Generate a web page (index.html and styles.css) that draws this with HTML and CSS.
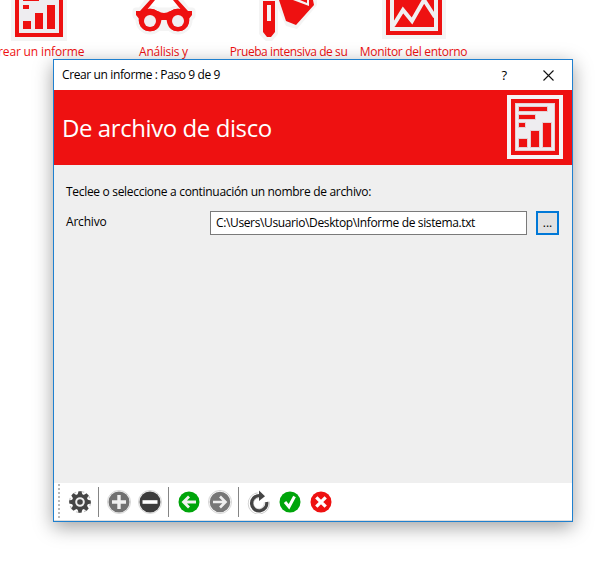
FILE: index.html
```
<!DOCTYPE html>
<html lang="es">
<head>
<meta charset="utf-8">
<title>Crear un informe</title>
<link rel="stylesheet" href="styles.css">
</head>
<body>
<main class="desktop">
  <nav class="tasks">
    <a class="task">
      <svg class="task-icon" width="64" height="41" viewBox="0 0 64 41">
        <path fill="#f4f4f4" d="M4 0h56v41H4z"/><path fill="#e11" d="M8 0h48v37H8z"/><path fill="#eeedf0" d="M12 0h40v33H12z"/>
        <path fill="#e11" d="M16 0h16v1H16zM16 5h6v4h-6zM16 21h8v8h-8zM28 13h8v16h-8zM40 5h8v24h-8z"/>
      </svg>
      <span class="label-report">Crear un informe</span>
    </a>
    <a class="task">
      <svg class="task-icon" width="64" height="41" viewBox="0 0 64 41">
        <g stroke="#f4f4f4" stroke-width="7" stroke-linejoin="round" fill="#f4f4f4"><path d="M4 11h56v5l-4 3H8l-4-3zM17 0l-9 12M47 0l9 12"/><circle cx="18" cy="20" r="11"/><circle cx="46" cy="20" r="11"/></g>
        <path fill="#e11" d="M4 11h4L18 0h5L14 11h12q3 2 6 2t6-2h12L41 0h5l10 11h4v4l-4 5H8l-4-5z"/>
        <circle cx="18" cy="20" r="11.2" fill="#e11"/><circle cx="46" cy="20" r="11.2" fill="#e11"/>
        <path fill="#f4f4f4" d="M27 23q5-4 10 0v8H27z"/><circle cx="18" cy="20" r="11.2" fill="#e11"/><circle cx="46" cy="20" r="11.2" fill="#e11"/>
        <circle cx="18" cy="21" r="6" fill="#f0eff1"/><circle cx="46" cy="21" r="6" fill="#f0eff1"/>
      </svg>
      <span class="label-analysis">Análisis y</span>
    </a>
    <a class="task">
      <svg class="task-icon" width="64" height="41" viewBox="0 0 64 41">
        <path fill="#f4f4f4" d="M2 0h58v5L40 29l-11-3-8-18v26l-6 7H9l-7-7z"/>
        <path fill="#e11" d="M6 1h12v31l-4 5h-4l-4-5zM22 0h34l1 5-18 20-10-4z"/>
        <path fill="#f4f4f4" d="M10 5h4v16h-4zM36 0h16v6z"/><path fill="#e11" d="M43 0h7v3z"/>
      </svg>
      <span class="label-test">Prueba intensiva de su</span>
    </a>
    <a class="task">
      <svg class="task-icon" width="64" height="41" viewBox="0 0 64 41">
        <path fill="#f4f4f4" d="M0 0h64v39H0z"/><path fill="#e11" d="M4 0h56v35H4z"/><path fill="#f0eff1" d="M8 0h48v31H8z"/>
        <path fill="#e11" d="M12 0h40v27H12z"/>
        <path fill="none" stroke="#f0eff1" stroke-width="4" d="M11 26L21 10l9 11L42 0l11 17"/>
      </svg>
      <span class="label-monitor">Monitor del entorno</span>
    </a>
  </nav>

  <section class="dialog" role="dialog">
    <header class="titlebar">
      <span class="title">Crear un informe : Paso 9 de 9</span>
      <span class="help">?</span>
      <svg class="close" width="11" height="11" viewBox="0 0 11 11"><path d="M.5.5l10 10M10.500.5l-10 10" stroke="#111" stroke-width="1.1"/></svg>
    </header>
    <div class="banner">
      <h1>De archivo de disco</h1>
      <svg width="56" height="64" viewBox="0 0 56 64">
        <path fill="#f5f4f6" d="M0 0h56v64H0z"/><path fill="#e11" d="M4 4h48v56H4z"/><path fill="#e6cfd3" d="M8 8h40v48H8z"/><path fill="#eeedf0" d="M9 9h38v46H9z"/>
        <path fill="#e6cfd3" d="M11 11h30v6H11zM11 19h18v6H11zM11 27h8v6h-8zM11 43h10v10H11zM23 35h10v18H23zM35 27h10v26H35z"/>
        <path fill="#e11" d="M12 12h28v4H12zM12 20h16v4H12zM12 28h6v4h-6zM12 44h8v8h-8zM24 36h8v16h-8zM36 28h8v24h-8z"/>
      </svg>
    </div>
    <div class="content">
      <p class="prompt">Teclee o seleccione a continuación un nombre de archivo:</p>
      <div class="field">
        <span class="field-name">Archivo</span>
        <div class="path"><span>C:\Users\Usuario\Desktop\Informe de sistema.txt</span></div>
        <button class="browse">...</button>
      </div>
    </div>
    <footer class="toolbar">
      <i class="grip"></i>
      <svg class="tool gear" viewBox="-12 -12 24 24">
        <circle r="10.500" fill="none" stroke="#c4c4c4" stroke-width="1.200" stroke-dasharray="4 4.250"/>
        <g fill="#444"><circle r="8"/>
        <path id="tooth" d="M-2.500-7l1-3.800h3l1 3.800v14l-1 3.800h-3l-1-3.800z"/><use href="#tooth" transform="rotate(45)"/><use href="#tooth" transform="rotate(90)"/><use href="#tooth" transform="rotate(135)"/></g>
        <circle r="3.800" fill="none" stroke="#eee" stroke-width="2"/>
      </svg>
      <i class="divider"></i>
      <svg class="tool plus" viewBox="-12 -12 24 24"><circle class="halo" r="11.500"/><circle r="10.500" fill="#717171"/><path d="M0-7V7M-7 0H7" stroke="#f0f0f0" stroke-width="3.400"/></svg>
      <svg class="tool minus" viewBox="-12 -12 24 24"><circle class="halo" r="11.500"/><circle r="10.500" fill="#3c3c3c"/><path d="M-7.500 0h15" stroke="#fff" stroke-width="3.600"/></svg>
      <i class="divider"></i>
      <svg class="tool back" viewBox="-12 -12 24 24"><circle r="10.500" fill="#00a50b"/><path d="M7 0H-5M0-5.500L-5.500 0 0 5.500" fill="none" stroke="#f2f2f2" stroke-width="2.800"/></svg>
      <svg class="tool next" viewBox="-12 -12 24 24"><circle class="halo" r="11.500"/><circle r="10.300" fill="#777"/><path d="M-7 0H5M0-5.500L5.500 0 0 5.500" fill="none" stroke="#eee" stroke-width="2.600"/></svg>
      <i class="divider"></i>
      <svg class="tool reload" viewBox="-12 -12 24 24">
        <path d="M-1-6.500A8 8 0 1 0 7.700 0" fill="none" stroke="#c9c9c9" stroke-width="6"/><path d="M-1-6.500A8 8 0 1 0 7.700 0" fill="none" stroke="#fff" stroke-width="4.500"/>
        <path d="M0-6.300A7.600 7.600 0 1 0 7.700 0" fill="none" stroke="#444" stroke-width="3.300"/><path d="M0-11.500L6-5.800 0-1z" fill="#444"/>
      </svg>
      <svg class="tool accept" viewBox="-12 -12 24 24"><circle r="10.500" fill="#00a50b"/><path d="M-5 0l4 4.800L4.500-5.500" fill="none" stroke="#fff" stroke-width="3"/></svg>
      <svg class="tool cancel" viewBox="-12 -12 24 24"><circle r="10.500" fill="#e11"/><path d="M-4.700-4.700l9.400 9.400M4.700-4.700l-9.400 9.400" stroke="#fff" stroke-width="3.300"/></svg>
    </footer>
  </section>
</main>
</body>
</html>
```
FILE: styles.css
```
* { box-sizing: border-box; }
body {
  margin: 0;
  background: #fff;
  color: #000;
  font: 12px/16px "Open Sans", "Noto Sans", sans-serif;
}
.desktop { position: relative; width: 606px; height: 584px; overflow: hidden; }
.tasks { display: flex; margin-left: -24px; }
.task {
  display: flex;
  flex: 0 0 125px;
  flex-direction: column;
  align-items: center;
  gap: 3px;
  color: #e11;
  white-space: nowrap;
}
.label-report { letter-spacing: -0.15px; padding-right: 2px; }
.label-analysis { letter-spacing: -0.25px; }
.label-test { letter-spacing: -0.42px; }
.label-monitor { letter-spacing: -0.3px; }
.dialog {
  position: absolute;
  left: 53px;
  top: 59px;
  display: flex;
  flex-direction: column;
  width: 520px;
  height: 463px;
  border: 1px solid #1f80cf;
  background: #efefef;
  box-shadow: 0 5px 18px rgba(0, 0, 0, .38);
}
.titlebar { display: flex; align-items: center; height: 30px; padding: 0 18px 0 8px; background: #fff; }
.title { flex: 1; letter-spacing: -0.38px; white-space: nowrap; }
.help { margin-right: 36px; font-size: 13px; }
.banner {
  display: flex;
  align-items: center;
  justify-content: space-between;
  height: 75px;
  padding: 0 9px 1px 8px;
  background: #e11;
  color: #fff;
}
.banner svg { margin-top: -1px; }
h1 { margin: 0 0 -2px; font-size: 24px; line-height: 32px; font-weight: 400; letter-spacing: -0.42px; }
.content { flex: 1; padding: 19px 13px 0 12px; }
.prompt { margin: 0; letter-spacing: -0.31px; white-space: nowrap; }
.field { display: flex; align-items: center; margin-top: 11px; }
.field-name { width: 144px; margin-top: -2px; letter-spacing: -0.2px; }
.path {
  width: 317px;
  height: 24px;
  padding: 3px 5px;
  border: 1px solid #7a7a7a;
  background: #fff;
  letter-spacing: -0.37px;
  white-space: nowrap;
}
.browse {
  width: 23px;
  height: 24px;
  margin-left: 9px;
  padding: 0;
  border: 2px solid #0078d7;
  background: #e1e1e1;
  font: inherit;
}
.toolbar {
  display: flex;
  align-items: center;
  height: 38px;
  padding-left: 4px;
  border-bottom: 1px solid #ddd;
  background: #fff;
}
.grip {
  width: 2px;
  height: 36px;
  background: repeating-linear-gradient(#b9b9b9 0 2px, transparent 2px 4px);
}
.divider { width: 1px; height: 30px; background: #858585; }
.tool { width: 24px; height: 24px; flex: none; }
.halo { fill: #fff; stroke: #c9c9c9; stroke-width: .8; }
.gear { margin: 0 6px 0 8px; }
.plus { margin: 0 7px 0 8px; }
.minus { margin-right: 6px; }
.back { margin: 0 7px 0 8px; }
.next { margin-right: 6px; }
.reload { margin: 0 7px 0 8px; }
.accept { margin-right: 7px; }
```
